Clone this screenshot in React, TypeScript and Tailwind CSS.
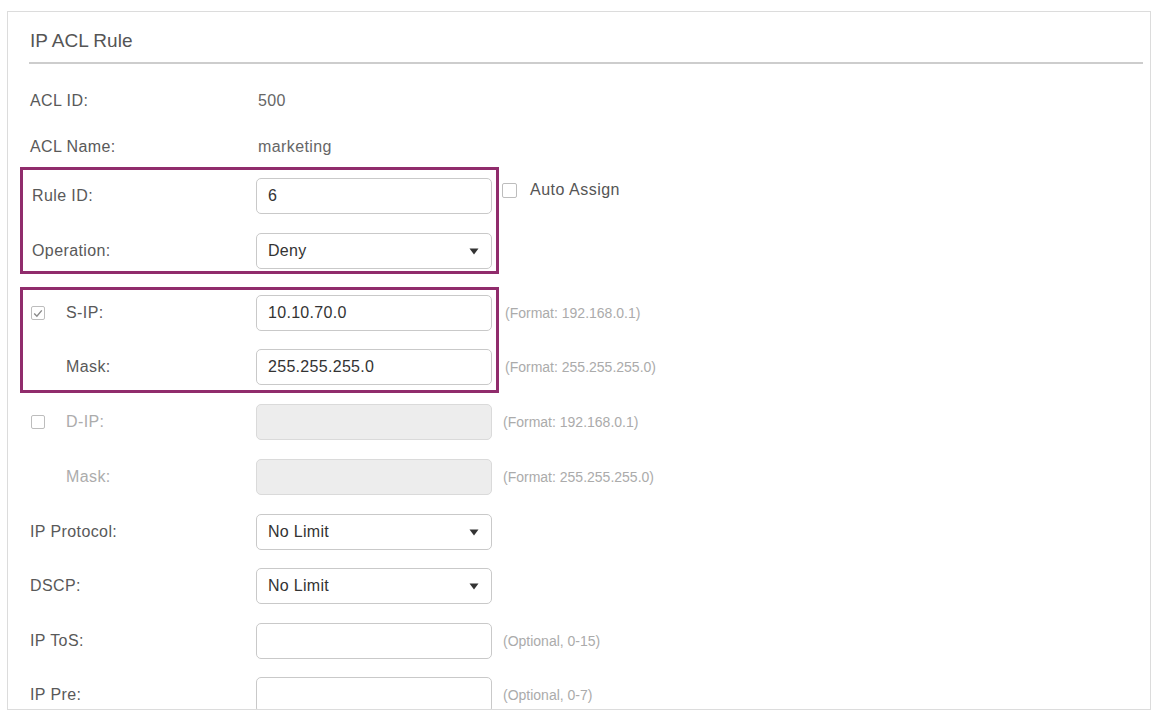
import React from "react";

const LABEL = "text-[16px] tracking-[0.4px] text-[#595959]";
const HINT = "text-[14px] text-[#ababab] whitespace-nowrap";

function Caret() {
  return (
    <svg width="10" height="7" viewBox="0 0 10 7" className="shrink-0">
      <polygon points="0.5,0.5 9.5,0.5 5,6.5" fill="#333" />
    </svg>
  );
}

function TextBox({ value, disabled }: { value?: string; disabled?: boolean }) {
  return (
    <div
      className={
        "w-[236px] h-[36px] rounded-[5px] border flex items-center pl-[11px] text-[16px] tracking-[0.3px] text-[#333] " +
        (disabled ? "bg-[#ededed] border-[#dadada]" : "bg-white border-[#c9c9c9]")
      }
    >
      {value}
    </div>
  );
}

function Select({ value }: { value: string }) {
  return (
    <div className="w-[236px] h-[36px] rounded-[5px] border border-[#c9c9c9] bg-white flex items-center justify-between pl-[11px] pr-[12px] text-[16px] tracking-[0.3px] text-[#333]">
      <span>{value}</span>
      <Caret />
    </div>
  );
}

function Check({ checked, size = 14 }: { checked?: boolean; size?: number }) {
  return (
    <div
      className="border border-[#bdbdbd] rounded-[2px] bg-white flex items-center justify-center shrink-0"
      style={{ width: size, height: size }}
    >
      {checked && (
        <svg width="10" height="9" viewBox="0 0 10 9">
          <polyline points="1.2,4.6 3.9,7.2 8.8,1.4" fill="none" stroke="#8a8a8a" strokeWidth="1.4" />
        </svg>
      )}
    </div>
  );
}

export default function App() {
  return (
    <div className="min-h-screen bg-white font-['Liberation_Sans',Arial,sans-serif] pt-[11px] pl-[7px]">
      <div className="w-[1144px] h-[699px] border border-[#dcdcdc] pl-[21px] pr-[7px] flex flex-col overflow-hidden">
        {/* panel title */}
        <div className="h-[52px] shrink-0 pt-[8px] flex items-center border-b-2 border-[#cdcdcd]">
          <span className="pl-[1px] text-[19px] text-[#555]">IP ACL Rule</span>
        </div>

        {/* read-only info */}
        <div className="mt-[21px] h-[32px] shrink-0 flex items-center">
          <span className={"w-[227px] pl-[1px] " + LABEL}>ACL ID:</span>
          <span className="pl-[2px] text-[16px] tracking-[0.3px] text-[#666]">500</span>
        </div>
        <div className="mt-[14px] h-[32px] shrink-0 flex items-center">
          <span className={"w-[227px] pl-[1px] " + LABEL}>ACL Name:</span>
          <span className="pl-[2px] text-[16px] tracking-[0.4px] text-[#666]">marketing</span>
        </div>

        {/* rule id / operation group */}
        <div className="mt-[4px] shrink-0 flex items-start">
          <div className="ml-[-9px] w-[479px] border-[3px] border-[#902c6c] pl-[9px] pr-[4px] pt-[8px] pb-[2px]">
            <div className="h-[36px] flex items-center">
              <span className={"w-[224px] " + LABEL}>Rule ID:</span>
              <TextBox value="6" />
            </div>
            <div className="mt-[19px] h-[36px] flex items-center">
              <span className={"w-[224px] " + LABEL}>Operation:</span>
              <Select value="Deny" />
            </div>
          </div>
          <div className="ml-[3px] mt-[15px] h-[16px] flex items-center gap-[13px]">
            <Check size={15} />
            <span className="text-[16px] tracking-[0.5px] text-[#555]">Auto Assign</span>
          </div>
        </div>

        {/* source ip group */}
        <div className="mt-[13px] shrink-0 flex items-start">
          <div className="ml-[-9px] w-[479px] border-[3px] border-[#902c6c] pl-[8px] pr-[4px] pt-[5px] pb-[5px]">
            <div className="h-[36px] flex items-center">
              <div className="w-[225px] flex items-center">
                <Check checked />
                <span className={"ml-[21px] " + LABEL}>S-IP:</span>
              </div>
              <TextBox value="10.10.70.0" />
            </div>
            <div className="mt-[18px] h-[36px] flex items-center">
              <span className={"w-[225px] pl-[35px] " + LABEL}>Mask:</span>
              <TextBox value="255.255.255.0" />
            </div>
          </div>
          <div className="ml-[6px] pt-[8px] flex flex-col">
            <div className={"h-[36px] flex items-center " + HINT}>(Format: 192.168.0.1)</div>
            <div className={"mt-[18px] h-[36px] flex items-center " + HINT}>(Format: 255.255.255.0)</div>
          </div>
        </div>

        {/* destination ip (disabled) */}
        <div className="mt-[11px] h-[36px] shrink-0 flex items-center">
          <div className="w-[227px] pl-[2px] flex items-center">
            <Check />
            <span className="ml-[21px] text-[16px] tracking-[0.4px] text-[#acacac]">D-IP:</span>
          </div>
          <TextBox disabled />
          <span className={"ml-[11px] " + HINT}>(Format: 192.168.0.1)</span>
        </div>
        <div className="mt-[19px] h-[36px] shrink-0 flex items-center">
          <span className="w-[227px] pl-[37px] text-[16px] tracking-[0.4px] text-[#acacac]">Mask:</span>
          <TextBox disabled />
          <span className={"ml-[11px] " + HINT}>(Format: 255.255.255.0)</span>
        </div>

        {/* protocol fields */}
        <div className="mt-[19px] h-[36px] shrink-0 flex items-center">
          <span className={"w-[227px] pl-[1px] " + LABEL}>IP Protocol:</span>
          <Select value="No Limit" />
        </div>
        <div className="mt-[18px] h-[36px] shrink-0 flex items-center">
          <span className={"w-[227px] pl-[1px] " + LABEL}>DSCP:</span>
          <Select value="No Limit" />
        </div>
        <div className="mt-[19px] h-[36px] shrink-0 flex items-center">
          <span className={"w-[227px] pl-[1px] " + LABEL}>IP ToS:</span>
          <TextBox />
          <span className={"ml-[11px] " + HINT}>(Optional, 0-15)</span>
        </div>
        <div className="mt-[18px] h-[36px] shrink-0 flex items-center">
          <span className={"w-[227px] pl-[1px] " + LABEL}>IP Pre:</span>
          <TextBox />
          <span className={"ml-[11px] " + HINT}>(Optional, 0-7)</span>
        </div>
      </div>
    </div>
  );
}
